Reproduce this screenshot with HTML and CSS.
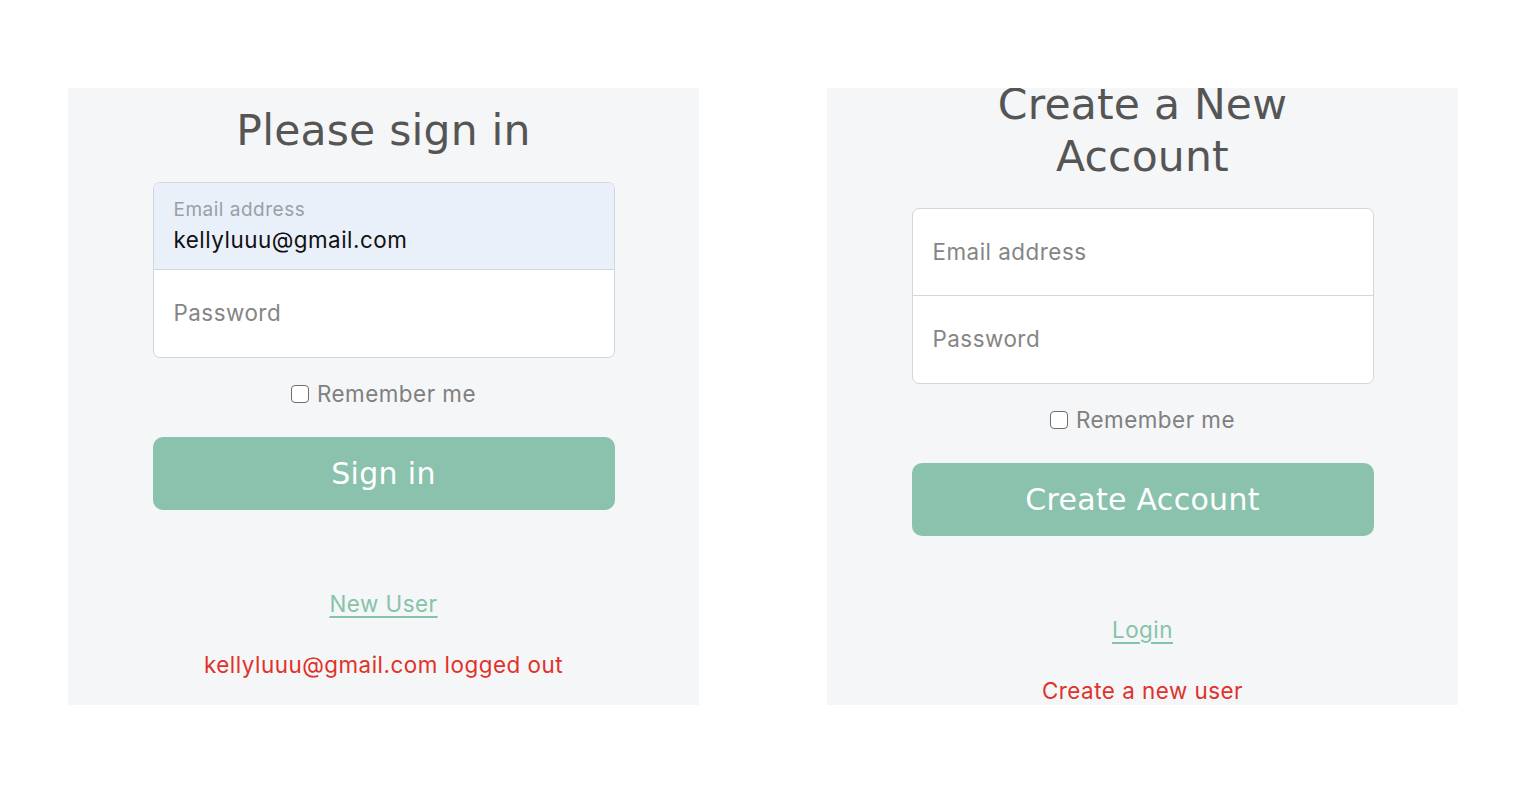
FILE: index.html
```html
<!DOCTYPE html>
<html lang="en">
<head>
<meta charset="utf-8">
<title>Sign in</title>
<link rel="stylesheet" href="styles.css">
</head>
<body>
<main class="page">
  <section class="panel">
    <div class="form">
      <h1 class="title">Please sign in</h1>
      <div class="fields">
        <div class="field field-filled">
          <span class="float-label">Email address</span>
          <span class="value">kellyluuu@gmail.com</span>
        </div>
        <div class="field">
          <span class="placeholder">Password</span>
        </div>
      </div>
      <label class="remember"><span class="box"></span>Remember me</label>
      <button class="btn" type="button">Sign in</button>
      <a class="link" href="#">New User</a>
      <p class="msg">kellyluuu@gmail.com logged out</p>
    </div>
  </section>
  <section class="panel">
    <div class="form">
      <h1 class="title">Create a New<br>Account</h1>
      <div class="fields">
        <div class="field">
          <span class="placeholder">Email address</span>
        </div>
        <div class="field">
          <span class="placeholder">Password</span>
        </div>
      </div>
      <label class="remember"><span class="box"></span>Remember me</label>
      <button class="btn" type="button">Create Account</button>
      <a class="link" href="#">Login</a>
      <p class="msg">Create a new user</p>
    </div>
  </section>
</main>
</body>
</html>
```
FILE: styles.css
```css
html, body {
  margin: 0;
  padding: 0;
  background: #ffffff;
}
body {
  font-family: Inter, "Liberation Sans", sans-serif;
  letter-spacing: 0.5px;
}
.page {
  display: flex;
  gap: 128px;
  padding: 88px 0 0 68px;
}
.panel {
  width: 631px;
  height: 617px;
  background: #f5f6f7;
  overflow: hidden;
  display: flex;
  flex-direction: column;
  align-items: center;
  justify-content: center;
}
.form {
  width: 462px;
  display: flex;
  flex-direction: column;
  align-items: center;
  padding-bottom: 7px;
}
.title {
  margin: 0 0 25px;
  font-family: "DejaVu Sans", sans-serif;
  font-weight: 400;
  font-size: 42.5px;
  line-height: 52px;
  color: #555555;
  text-align: center;
  letter-spacing: 0.2px;
}
.fields {
  width: 100%;
  box-sizing: border-box;
  border: 1px solid #d3d6da;
  border-radius: 7px;
  overflow: hidden;
  background: #ffffff;
}
.field {
  height: 87px;
  padding: 0 20px;
  display: flex;
  flex-direction: column;
  justify-content: center;
  box-sizing: border-box;
}
.field:first-child {
  border-bottom: 1px solid #d3d6da;
}
.field-filled {
  background: #e9f0f9;
  justify-content: flex-start;
  padding-top: 14px;
}
.float-label {
  font-size: 19px;
  line-height: 26px;
  color: #9a9fa6;
}
.value {
  font-size: 22.4px;
  line-height: 34px;
  color: #111111;
}
.placeholder {
  font-size: 22.4px;
  line-height: 34px;
  color: #858585;
}
.remember {
  margin-top: 19px;
  display: flex;
  align-items: center;
  gap: 8px;
  font-size: 22.4px;
  line-height: 34px;
  color: #808080;
}
.box {
  width: 18px;
  height: 18px;
  border: 1.5px solid #6e6e6e;
  border-radius: 4px;
  background: #ffffff;
  box-sizing: border-box;
}
.btn {
  margin-top: 26px;
  width: 100%;
  height: 73px;
  border: none;
  border-radius: 10px;
  background: #8ac2ad;
  color: #ffffff;
  font-family: "DejaVu Sans", sans-serif;
  font-size: 30px;
  letter-spacing: 0.3px;
}
.link {
  margin-top: 77px;
  font-size: 22.4px;
  line-height: 34px;
  color: #86c3aa;
  text-decoration: underline;
  text-underline-offset: 4px;
}
.msg {
  margin: 27px 0 0;
  font-size: 22.4px;
  line-height: 34px;
  color: #e0322b;
}
```
